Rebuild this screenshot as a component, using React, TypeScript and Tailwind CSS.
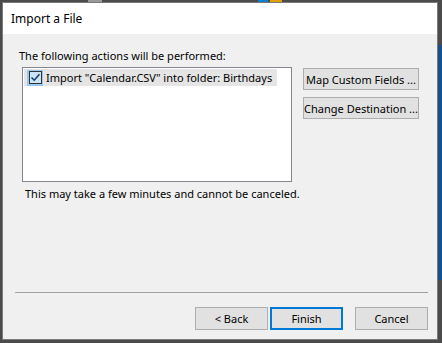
import React from "react";

const font = { fontFamily: '"Segoe UI", "Noto Sans", "Open Sans", sans-serif' };

function WinButton({
  label,
  primary = false,
  className = "",
}: {
  label: string;
  primary?: boolean;
  className?: string;
}) {
  return (
    <button
      className={
        "flex items-center justify-center whitespace-nowrap bg-[#e1e1e1] text-[11px] leading-none text-black " +
        (primary ? "border-2 border-[#0078d7] " : "border border-[#adadad] ") +
        className
      }
    >
      {label}
    </button>
  );
}

export default function App() {
  return (
    <div
      className="relative h-[343px] w-[442px] overflow-hidden bg-[#4b4b4b] pl-[2px] pt-[2px]"
      style={font}
    >
      {/* desktop bits behind the dialog */}
      <div className="absolute left-[438px] top-[45px] h-[235px] w-[4px] bg-[#1b4f8c]" />
      <div className="absolute left-[88px] top-0 h-[2px] w-[14px] bg-[#9a9a9a]" />
      <div className="absolute left-[258px] top-0 h-[2px] w-[10px] bg-[#0a7fd0]" />
      <div className="absolute left-[270px] top-0 h-[2px] w-[12px] bg-[#e0a000]" />

      {/* Dialog */}
      <div className="flex h-[338px] w-[436px] flex-col border border-[#7a7a7a] bg-[#f0f0f0]">
        {/* Title bar */}
        <div className="flex h-[31px] shrink-0 items-center bg-white pl-[8px] text-[12px] text-black">
          Import a File
        </div>

        {/* Body */}
        <div className="flex flex-1 flex-col pl-[16px] pr-[9px]">
          <p className="mt-[14px] whitespace-nowrap text-[11px] leading-[15px] text-black">
            The following actions will be performed:
          </p>

          <div className="mt-[4px] flex gap-[11px]">
            {/* List box */}
            <div className="ml-[3px] h-[115px] w-[270px] border border-[#828790] bg-white p-[1px]">
              <div className="flex h-[17px] w-[253px] items-center bg-[#e5e5e5]">
                <span className="ml-[3px] flex h-[16px] w-[16px] items-center justify-center bg-[#99c9ef]">
                  <span className="flex h-[13px] w-[13px] items-center justify-center border border-[#333333] bg-[#cce4f7]">
                    <svg width="11" height="11" viewBox="0 0 11 11">
                      <path
                        d="M1.5 5.5 L4.2 8.2 L9.5 2.2"
                        fill="none"
                        stroke="#1c3f66"
                        strokeWidth="1.6"
                      />
                    </svg>
                  </span>
                </span>
                <span className="ml-[3px] whitespace-nowrap text-[11px] leading-none text-black">
                  Import "Calendar.CSV" into folder: Birthdays
                </span>
              </div>
            </div>

            {/* Side buttons */}
            <div className="mt-[1px] flex flex-col gap-[7px]">
              <WinButton label="Map Custom Fields ..." className="h-[22px] w-[116px]" />
              <WinButton label="Change Destination ..." className="h-[22px] w-[116px]" />
            </div>
          </div>

          <p className="ml-[6px] mt-[4px] whitespace-nowrap text-[11px] leading-[15px] text-black">
            This may take a few minutes and cannot be canceled.
          </p>

          <div className="flex-1" />

          {/* Separator */}
          <div className="-ml-[4px] h-[1px] w-[413px] bg-[#a0a0a0]" />

          {/* Bottom buttons */}
          <div className="mb-[9px] mt-[14px] flex justify-end">
            <WinButton label="< Back" className="h-[23px] w-[73px]" />
            <WinButton label="Finish" primary className="ml-[2px] h-[23px] w-[73px]" />
            <WinButton label="Cancel" className="ml-[12px] h-[23px] w-[73px]" />
          </div>
        </div>
      </div>
    </div>
  );
}
